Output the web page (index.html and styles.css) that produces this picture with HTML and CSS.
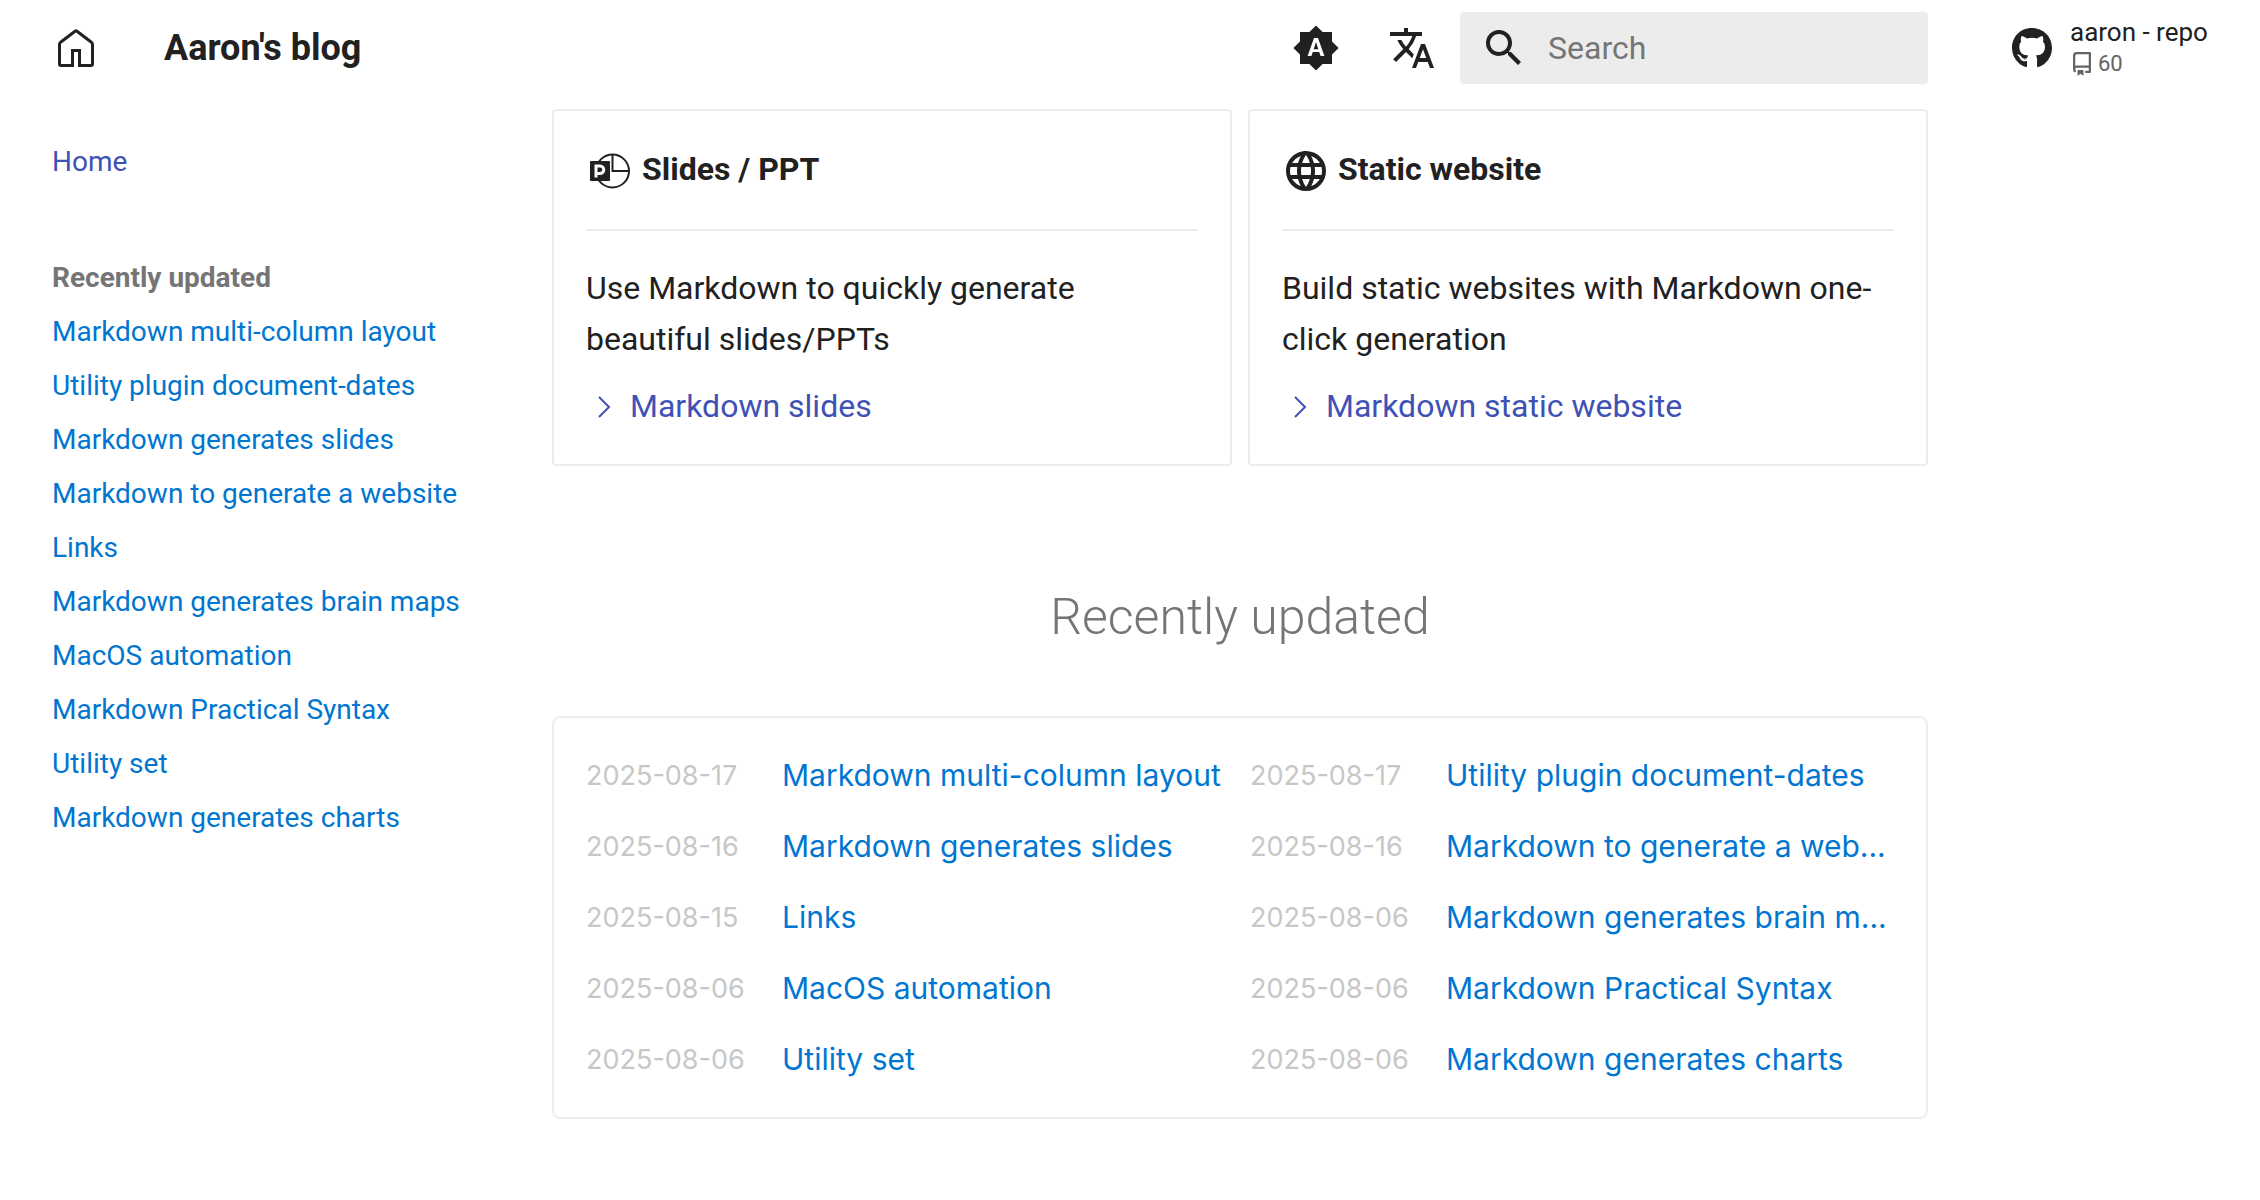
FILE: index.html
```
<!DOCTYPE html>
<html lang="en">
<head>
    <meta charset="utf-8">
    <meta name="viewport" content="width=device-width, initial-scale=1">
    <title>Aaron's blog</title>
    <link rel="stylesheet" href="styles.css">
</head>
<body>
    <header class="header">
        <div class="header-brand">
            <a class="logo" href="#" aria-label="Home">
                <svg viewBox="0 0 36 38"><path d="M17 2.200 2.600 13.200Q1.500 14 1.500 15.500V35q0 1.500 1.500 1.500h11.500v-15h7v15H33q1.500 0 1.500-1.500V15.500q0-1.500-1.100-2.300L19 2.200q-1-.8-2 0z"/></svg>
            </a>
            <span class="site-title">Aaron's blog</span>
        </div>
        <div class="header-tools">
            <button class="icon-button" type="button" aria-label="Switch theme">
                <svg viewBox="0 0 24 24"><path d="m14.300 16-.7-2h-3.200l-.7 2H7.800L11 7h2l3.200 9zM20 8.690V4h-4.690L12 .690 8.690 4H4v4.690L.690 12 4 15.310V20h4.690L12 23.310 15.310 20H20v-4.690L23.310 12zm-9.150 3.960h2.300L12 9z"/></svg>
            </button>
            <button class="icon-button" type="button" aria-label="Select language">
                <svg viewBox="0 0 24 24"><path d="m12.870 15.070-2.540-2.510.03-.03A17.500 17.500 0 0 0 14.070 6H17V4h-7V2H8v2H1v2h11.170C11.500 7.920 10.440 9.750 9 11.350 8.070 10.320 7.300 9.190 6.690 8h-2c.73 1.630 1.730 3.170 2.980 4.560l-5.090 5.020L4 19l5-5 3.110 3.110zM18.500 10h-2L12 22h2l1.120-3h4.750L21 22h2zm-2.620 7 1.620-4.330L19.120 17z"/></svg>
            </button>
            <form class="search">
                <label class="search-icon" for="search-input" aria-label="Search">
                    <svg viewBox="0 0 24 24"><path d="M9.500 3A6.500 6.500 0 0 1 16 9.500c0 1.610-.590 3.090-1.560 4.230l.270.270h.790l5 5-1.500 1.500-5-5v-.790l-.270-.270A6.520 6.520 0 0 1 9.500 16a6.500 6.500 0 0 1 0-13m0 2C7 5 5 7 5 9.500S7 14 9.500 14 14 12 14 9.500 12 5 9.500 5"/></svg>
                </label>
                <input class="search-input" id="search-input" type="text" placeholder="Search">
            </form>
        </div>
        <a class="repo" href="#">
            <svg class="repo-icon" viewBox="0 0 496 512"><path d="M165.900 397.400c0 2-2.300 3.600-5.200 3.600-3.300.3-5.600-1.300-5.600-3.600 0-2 2.300-3.600 5.200-3.600 3-.3 5.600 1.300 5.600 3.600zM244.800 8C106.100 8 0 113.300 0 252c0 110.900 69.800 205.800 169.500 239.200 12.800 2.300 17.300-5.600 17.300-12.100 0-6.200-.3-40.400-.3-61.400 0 0-70 15-84.700-29.800 0 0-11.400-29.100-27.800-36.600 0 0-22.900-15.700 1.600-15.400 0 0 24.900 2 38.600 25.800 21.900 38.600 58.600 27.500 72.900 20.900 2.300-16 8.800-27.100 16-33.700-55.900-6.200-112.300-14.300-112.300-110.500 0-27.500 7.600-41.300 23.600-58.900-2.600-6.500-11.100-33.300 2.600-67.900 20.900-6.500 69 27 69 27 20-5.600 41.500-8.500 62.800-8.500s42.800 2.900 62.800 8.500c0 0 48.100-33.600 69-27 13.700 34.700 5.200 61.400 2.600 67.900 16 17.700 25.800 31.500 25.800 58.900 0 96.500-58.900 104.200-114.800 110.500 9.200 7.900 17 22.900 17 46.400 0 33.700-.3 75.400-.3 83.600 0 6.500 4.600 14.400 17.300 12.100C428.200 457.800 496 362.900 496 252 496 113.300 383.500 8 244.800 8z"/></svg>
            <span class="repo-text">
                <span class="repo-name">aaron - repo</span>
                <span class="repo-fact">
                    <svg viewBox="0 0 16 16"><path d="M2 2.500A2.500 2.500 0 0 1 4.500 0h8.750a.75.75 0 0 1 .75.75v12.500a.75.75 0 0 1-.75.75h-2.500a.75.75 0 0 1 0-1.500h1.750v-2h-8a1 1 0 0 0-.714 1.700.75.75 0 1 1-1.072 1.050A2.500 2.500 0 0 1 2 11.500Zm10.500-1h-8a1 1 0 0 0-1 1v6.708A2.500 2.500 0 0 1 4.500 9h8ZM5 12.250a.25.25 0 0 1 .25-.25h3.500a.25.25 0 0 1 .25.25v3.250a.25.25 0 0 1-.4.200l-1.450-1.087a.25.25 0 0 0-.3 0L5.400 15.700a.25.25 0 0 1-.4-.2Z"/></svg>
                    60
                </span>
            </span>
        </a>
    </header>

    <div class="container">
        <nav class="sidebar">
            <a class="nav-home" href="#">Home</a>
            <h2 class="nav-title">Recently updated</h2>
            <ul class="nav-list">
                <li><a href="#">Markdown multi-column layout</a></li>
                <li><a href="#">Utility plugin document-dates</a></li>
                <li><a href="#">Markdown generates slides</a></li>
                <li><a href="#">Markdown to generate a website</a></li>
                <li><a href="#">Links</a></li>
                <li><a href="#">Markdown generates brain maps</a></li>
                <li><a href="#">MacOS automation</a></li>
                <li><a href="#">Markdown Practical Syntax</a></li>
                <li><a href="#">Utility set</a></li>
                <li><a href="#">Markdown generates charts</a></li>
            </ul>
        </nav>

        <main class="content">
            <div class="cards">
                <section class="card">
                    <h3 class="card-title">
                        <svg viewBox="0 0 48 48">
                            <circle cx="26.500" cy="24" r="16.500" fill="none" stroke="currentColor" stroke-width="2"/>
                            <path d="M26.500 7.500V24H43" fill="none" stroke="currentColor" stroke-width="2"/>
                            <rect x="4" y="14" width="20" height="20" rx="1"/>
                            <path d="M10 30.500V19h4a3.500 3.500 0 0 1 0 7.500h-4" fill="none" stroke="#fff" stroke-width="3"/>
                        </svg>
                        Slides / PPT
                    </h3>
                    <hr>
                    <p>Use Markdown to quickly generate beautiful slides/PPTs</p>
                    <a class="card-link" href="#">
                        <svg viewBox="0 0 16 24"><path d="m3 2 10 10L3 22"/></svg>
                        Markdown slides
                    </a>
                </section>
                <section class="card">
                    <h3 class="card-title">
                        <svg viewBox="0 0 24 24"><path d="M16.360 14c.080-.660.140-1.320.140-2s-.060-1.340-.140-2h3.380c.160.640.260 1.310.260 2s-.1 1.360-.260 2m-5.150 5.560c.6-1.110 1.060-2.310 1.380-3.560h2.950a8.030 8.030 0 0 1-4.330 3.560M14.340 14H9.660c-.1-.660-.160-1.320-.160-2s.060-1.350.160-2h4.680c.090.650.160 1.320.160 2s-.070 1.340-.160 2M12 19.960c-.830-1.200-1.500-2.530-1.910-3.960h3.820c-.410 1.430-1.080 2.760-1.910 3.960M8 8H5.080A7.920 7.920 0 0 1 9.400 4.440C8.800 5.550 8.350 6.750 8 8m-2.920 8H8c.350 1.250.8 2.450 1.400 3.560A8 8 0 0 1 5.080 16m-.820-2C4.100 13.360 4 12.690 4 12s.1-1.360.260-2h3.380c-.080.660-.140 1.320-.140 2s.060 1.340.140 2M12 4.030c.830 1.200 1.500 2.540 1.910 3.970h-3.820c.410-1.430 1.080-2.770 1.910-3.970M18.920 8h-2.950a15.700 15.700 0 0 0-1.380-3.560c1.840.630 3.370 1.900 4.330 3.560M12 2C6.470 2 2 6.500 2 12a10 10 0 0 0 10 10 10 10 0 0 0 10-10A10 10 0 0 0 12 2"/></svg>
                        Static website
                    </h3>
                    <hr>
                    <p>Build static websites with Markdown one-click generation</p>
                    <a class="card-link" href="#">
                        <svg viewBox="0 0 16 24"><path d="m3 2 10 10L3 22"/></svg>
                        Markdown static website
                    </a>
                </section>
            </div>

            <h1 class="section-title">Recently updated</h1>

            <ul class="recent">
                <li><time>2025-08-17</time><a href="#">Markdown multi-column layout</a></li>
                <li><time>2025-08-17</time><a href="#">Utility plugin document-dates</a></li>
                <li><time>2025-08-16</time><a href="#">Markdown generates slides</a></li>
                <li><time>2025-08-16</time><a href="#">Markdown to generate a web...</a></li>
                <li><time>2025-08-15</time><a href="#">Links</a></li>
                <li><time>2025-08-06</time><a href="#">Markdown generates brain m...</a></li>
                <li><time>2025-08-06</time><a href="#">MacOS automation</a></li>
                <li><time>2025-08-06</time><a href="#">Markdown Practical Syntax</a></li>
                <li><time>2025-08-06</time><a href="#">Utility set</a></li>
                <li><time>2025-08-06</time><a href="#">Markdown generates charts</a></li>
            </ul>
        </main>
    </div>
</body>
</html>
```
FILE: styles.css
```
* {
    box-sizing: border-box;
}
body {
    margin: 0;
    background-color: #fff;
    color: #212121;
    font-family: Roboto, "Liberation Sans", sans-serif;
    font-size: 32px;
    line-height: 51px;
}
a {
    color: #0076d1;
    text-decoration: none;
}
svg {
    display: block;
    fill: currentColor;
}
ul {
    list-style: none;
    margin: 0;
    padding: 0;
}

/* Header */
.header {
    display: grid;
    grid-template-columns: 552px 1fr 332px;
    align-items: center;
    height: 96px;
}
.header-brand {
    display: flex;
    align-items: center;
    gap: 70px;
    padding-left: 58px;
}
.logo svg {
    width: 36px;
    height: 38px;
    fill: none;
    stroke: #212121;
    stroke-width: 3;
}
.site-title {
    font-size: 36px;
    font-weight: 700;
}
.header-tools {
    display: flex;
    justify-content: flex-end;
    align-items: center;
}
.icon-button {
    padding: 0;
    margin-right: 48px;
    border: none;
    background: none;
    color: inherit;
    cursor: pointer;
}
.icon-button + .icon-button {
    margin-right: 24px;
}
.icon-button svg,
.search-icon svg {
    width: 48px;
    height: 48px;
}
.search {
    display: flex;
    align-items: center;
    gap: 20px;
    width: 468px;
    height: 72px;
    padding: 0 20px;
    border-radius: 4px;
    background-color: #ececec;
}
.search-input {
    flex: 1;
    min-width: 0;
    padding: 0;
    border: none;
    outline: none;
    background: none;
    color: inherit;
    font: inherit;
}
.search-input::placeholder {
    color: #757575;
    opacity: 1;
}
.repo {
    display: flex;
    align-items: center;
    gap: 18px;
    padding-left: 84px;
    color: #212121;
}
.repo-icon {
    width: 40px;
    height: 42px;
}
.repo-text {
    display: flex;
    flex-direction: column;
    font-size: 26px;
    line-height: 32px;
    white-space: nowrap;
}
.repo-fact {
    display: flex;
    align-items: center;
    gap: 4px;
    color: #646464;
    font-size: 22px;
}
.repo-fact svg {
    width: 24px;
    height: 24px;
}

/* Page */
.container {
    display: grid;
    grid-template-columns: 500px 1fr;
    column-gap: 52px;
    padding-right: 332px;
}
.sidebar {
    padding: 45px 0 0 52px;
    font-size: 28px;
    line-height: 42px;
}
.nav-home,
.card-link {
    color: #4051b5;
}
.nav-title {
    margin: 74px 0 12px;
    color: #757575;
    font-size: 28px;
    font-weight: 700;
}
.nav-list {
    display: grid;
    gap: 12px;
}
.content {
    padding-top: 13px;
}
.cards {
    display: grid;
    grid-template-columns: 1fr 1fr;
    gap: 16px;
}
.card {
    padding: 32px;
    border: 2px solid #ececec;
    border-radius: 4px;
}
.card-title {
    display: flex;
    align-items: center;
    gap: 8px;
    margin: 0;
    font-size: 32px;
    font-weight: 700;
}
.card-title svg {
    width: 48px;
    height: 48px;
    margin-top: 4px;
}
.card hr {
    height: 2px;
    margin: 34px 0 32px;
    border: none;
    background-color: #ededed;
}
.card p {
    margin: 0 0 16px;
}
.card-link {
    display: flex;
    align-items: center;
    gap: 18px;
    padding-left: 10px;
}
.card-link svg {
    width: 16px;
    height: 24px;
    fill: none;
    stroke: currentColor;
    stroke-width: 2;
}
.section-title {
    margin: 119px 0 67px;
    color: #757575;
    font-size: 50px;
    font-weight: 300;
    line-height: 64px;
    text-align: center;
}
.recent {
    display: grid;
    grid-template-columns: 1fr 1fr;
    column-gap: 20px;
    padding: 22px 32px;
    border: 2px solid #eee;
    border-radius: 8px;
    font-family: Inter, sans-serif;
    line-height: 71px;
}
.recent li {
    display: grid;
    grid-template-columns: 196px 1fr;
}
.recent time {
    color: #c7c7c7;
    font-size: 27px;
}
.recent a {
    overflow: hidden;
    font-size: 30px;
    text-overflow: ellipsis;
    white-space: nowrap;
}
```
